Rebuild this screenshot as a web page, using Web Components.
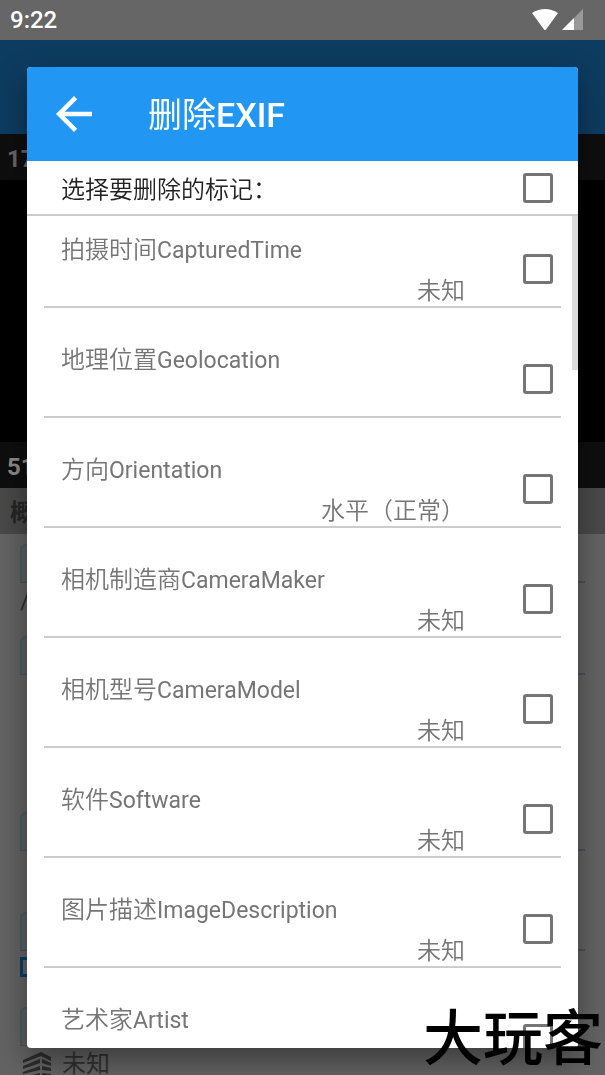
<!DOCTYPE html>
<html lang="zh-CN">
<head>
<meta charset="utf-8">
<meta name="viewport" content="width=device-width, initial-scale=1">
<title>删除EXIF</title>
<style>
  html, body {
    height: 100%;
    margin: 0;
  }
  body {
    overflow: hidden;
    background: #636363;
    font-family: Roboto, "Noto Sans CJK SC", sans-serif;
    font-size: 24px;
  }
  b {
    font-weight: 500;
  }
</style>
</head>
<body>
<status-bar>9:22</status-bar>
<photo-page></photo-page>
<modal-dialog>
  <span slot="heading">删除<b>EXIF</b></span>
  <select-all slot="toolbar">选择要删除的标记：</select-all>
  <tag-row name="拍摄时间" key="CapturedTime" value="未知"></tag-row>
  <tag-row name="地理位置" key="Geolocation"></tag-row>
  <tag-row name="方向" key="Orientation" value="水平（正常）"></tag-row>
  <tag-row name="相机制造商" key="CameraMaker" value="未知"></tag-row>
  <tag-row name="相机型号" key="CameraModel" value="未知"></tag-row>
  <tag-row name="软件" key="Software" value="未知"></tag-row>
  <tag-row name="图片描述" key="ImageDescription" value="未知"></tag-row>
  <tag-row name="艺术家" key="Artist"></tag-row>
</modal-dialog>
<site-mark>大玩客</site-mark>

<script>
// shared look of the tick boxes
const checkboxStyle = `
  input {
    appearance: none;
    flex: none;
    box-sizing: border-box;
    width: 30px;
    height: 30px;
    margin: 0;
    border: 3px solid #757575;
    border-radius: 3px;
    background: #fff;
  }
  input:checked {
    border-color: #2196f3;
    background: #2196f3;
  }
`;

function makeTemplate(html) {
  const template = document.createElement("template");
  template.innerHTML = html;
  return template;
}

class BaseElement extends HTMLElement {
  constructor() {
    super();
    this.attachShadow({mode: "open"});
    this.shadowRoot.appendChild(this.constructor.template.content.cloneNode(true));
  }
}

class StatusBar extends BaseElement {}
StatusBar.template = makeTemplate(`
  <style>
    :host {
      display: flex;
      align-items: center;
      justify-content: space-between;
      height: 40px;
      padding: 0 22px 0 10px;
      background: #666;
      color: #fff;
      font-weight: 500;
    }
    div {
      display: flex;
      gap: 4px;
    }
    svg {
      display: block;
    }
  </style>
  <slot></slot>
  <div>
    <svg width="26" height="22" viewBox="0 0 26 22"><path d="M0 4Q13 -4 26 4L14 20.500Q13 21.500 12 20.500Z" fill="#fff"/></svg>
    <svg width="21" height="22" viewBox="0 0 21 22"><path d="M21 0V21H0Z" fill="#999"/><path d="M12 9V21H0Z" fill="#fff"/></svg>
  </div>
`);
customElements.define("status-bar", StatusBar);

// the dimmed page under the dialog
class PhotoPage extends BaseElement {}
PhotoPage.template = makeTemplate(`
  <style>
    :host {
      display: block;
      color: #303030;
    }
    .appbar {
      height: 94px;
      background: #0d3c61;
    }
    .strip {
      height: 46px;
      padding-left: 7px;
      background: #0e0e0e;
      color: #666;
      font-weight: 700;
      line-height: 50px;
    }
    .strip.bottom {
      color: #8a8a8a;
    }
    .photo {
      height: 262px;
      background: #000;
    }
    h2 {
      height: 46px;
      margin: 0;
      padding-left: 10px;
      background: #494949;
      color: #252525;
      font-size: 24px;
      font-weight: 700;
      line-height: 50px;
    }
    .form {
      padding: 10px 20px 0;
    }
  </style>
  <div class="appbar"></div>
  <div class="strip">17</div>
  <div class="photo"></div>
  <div class="strip bottom">51</div>
  <h2>概</h2>
  <div class="form">
    <info-field style="--space: 53px">/</info-field>
    <info-field style="--space: 137px"></info-field>
    <info-field style="--space: 61px"></info-field>
    <info-field style="--space: 56px" linked></info-field>
    <info-field style="--space: 53px">
      <svg slot="icon" width="30" height="26" viewBox="0 0 30 26" fill="#2d2d2d">
        <path d="M1 8L19 0L29 5V9L19 4L1 11ZM1 14L18 7V11L1 17ZM1 20L18 14V18L1 22ZM20 7L29 11V14L20 11ZM20 14L29 16V19L20 18ZM1 25L18 21V26H1ZM20 21L29 22V26H20Z"/>
      </svg>
      未知
    </info-field>
  </div>
`);

class InfoField extends BaseElement {}
InfoField.template = makeTemplate(`
  <style>
    :host {
      display: block;
    }
    .head {
      box-sizing: border-box;
      height: 39px;
      border-bottom: 2px solid #43535d;
    }
    .tab {
      box-sizing: border-box;
      width: 160px;
      height: 38px;
      border: 2px solid #4b5b64;
      border-bottom: 0;
      border-radius: 6px 6px 0 0;
      background: #5c6062;
    }
    .value {
      box-sizing: border-box;
      display: flex;
      gap: 10px;
      height: var(--space);
      padding-top: 6px;
      line-height: 24px;
    }
    ::slotted(svg) {
      margin-left: 2px;
    }
    .link {
      display: none;
      box-sizing: border-box;
      width: 20px;
      height: 20px;
      border: 3px solid #0d3c68;
    }
    :host([linked]) .link {
      display: block;
    }
  </style>
  <div class="head"><div class="tab"></div></div>
  <div class="value"><span class="link"></span><slot name="icon"></slot><span><slot></slot></span></div>
`);
customElements.define("info-field", InfoField);
customElements.define("photo-page", PhotoPage);

class ModalDialog extends BaseElement {
  connectedCallback() {
    this.shadowRoot.querySelector("button").addEventListener("click", () => this.remove());
  }
}
ModalDialog.template = makeTemplate(`
  <style>
    :host {
      position: fixed;
      inset: 0;
      box-sizing: border-box;
      display: flex;
      padding: 67px 27px 27px;
    }
    section {
      flex: 1;
      min-width: 0;
      display: flex;
      flex-direction: column;
      overflow: hidden;
      border-radius: 4px;
      background: #fff;
      box-shadow: 0 12px 30px rgba(0, 0, 0, .4);
    }
    header {
      flex: none;
      display: flex;
      align-items: center;
      gap: 47px;
      height: 94px;
      padding-left: 20px;
      background: #2196f3;
      color: #fff;
    }
    button {
      padding: 0;
      border: 0;
      background: none;
      color: inherit;
    }
    svg {
      display: block;
    }
    h1 {
      margin: 0;
      padding-top: 2px;
      font-size: 34px;
      font-weight: 400;
      line-height: 40px;
    }
    .list {
      flex: 1;
      min-height: 0;
      position: relative;
      display: flex;
      flex-direction: column;
      gap: 18px;
      overflow: hidden;
      padding: 0 17px;
    }
    .thumb {
      position: absolute;
      top: 0;
      right: 0;
      width: 6px;
      height: 154px;
      background: #dcdcdc;
    }
  </style>
  <section role="dialog">
    <header>
      <button aria-label="返回">
        <svg width="54" height="54" viewBox="0 0 24 24" fill="currentColor"><path d="M20 11H7.830l5.590-5.590L12 4l-8 8 8 8 1.410-1.410L7.830 13H20v-2z"/></svg>
      </button>
      <h1><slot name="heading"></slot></h1>
    </header>
    <slot name="toolbar"></slot>
    <div class="list">
      <slot></slot>
      <div class="thumb"></div>
    </div>
  </section>
`);
customElements.define("modal-dialog", ModalDialog);

class SelectAll extends BaseElement {
  connectedCallback() {
    this.shadowRoot.querySelector("input").addEventListener("change", (event) => {
      document.querySelectorAll("tag-row").forEach((row) => {
        row.checked = event.target.checked;
      });
    });
  }
}
SelectAll.template = makeTemplate(`
  <style>
    ${checkboxStyle}
    :host {
      flex: none;
      display: flex;
      align-items: center;
      justify-content: space-between;
      height: 53px;
      padding: 0 25px 0 34px;
      border-bottom: 2px solid #ccc;
      color: #212121;
      font-weight: 350;
    }
  </style>
  <label for="all"><slot></slot></label>
  <input type="checkbox" id="all">
`);
customElements.define("select-all", SelectAll);

class TagRow extends BaseElement {
  connectedCallback() {
    this.shadowRoot.querySelector(".name").textContent = this.getAttribute("name");
    this.shadowRoot.querySelector(".key").textContent = this.getAttribute("key");
    this.shadowRoot.querySelector("output").textContent = this.getAttribute("value") || "";
  }

  set checked(value) {
    this.shadowRoot.querySelector("input").checked = value;
  }

  get checked() {
    return this.shadowRoot.querySelector("input").checked;
  }
}
TagRow.template = makeTemplate(`
  <style>
    ${checkboxStyle}
    :host {
      flex: none;
      box-sizing: border-box;
      display: flex;
      height: 92px;
      padding: 0 8px 0 17px;
      border-bottom: 2px solid #ccc;
      color: #757575;
      font-weight: 350;
    }
    .text {
      flex: 1;
      display: flex;
      flex-direction: column;
      justify-content: space-between;
      padding: 19px 58px 0 0;
      line-height: 30px;
    }
    .key {
      font-size: 23px;
      font-weight: 400;
    }
    output {
      text-align: right;
      min-height: 30px;
    }
    input {
      margin-top: 38px;
    }
  </style>
  <div class="text">
    <label for="tag"><span class="name"></span><span class="key"></span></label>
    <output for="tag"></output>
  </div>
  <input type="checkbox" id="tag">
`);
customElements.define("tag-row", TagRow);

class SiteMark extends BaseElement {}
SiteMark.template = makeTemplate(`
  <style>
    :host {
      position: fixed;
      right: 2px;
      bottom: 5px;
      color: #000;
      font-size: 60px;
      font-weight: 500;
      line-height: 60px;
      pointer-events: none;
    }
  </style>
  <slot></slot>
`);
customElements.define("site-mark", SiteMark);
</script>
</body>
</html>
